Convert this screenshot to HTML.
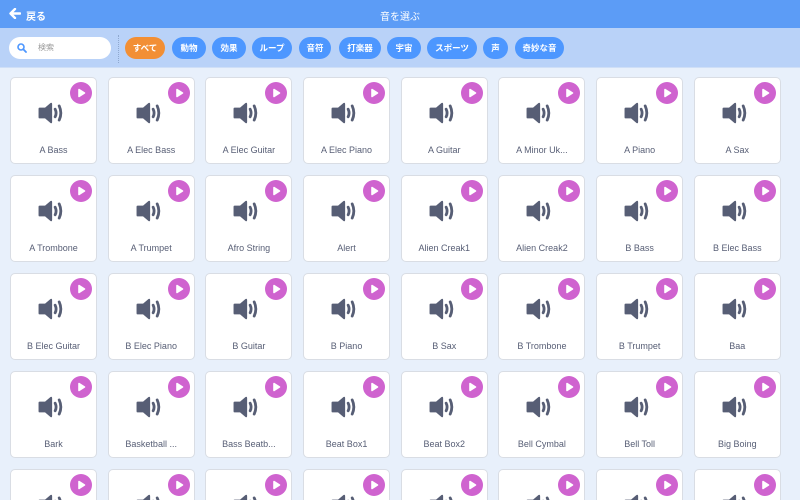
<!DOCTYPE html>
<html><head><meta charset="utf-8">
<style>
*{margin:0;padding:0;box-sizing:border-box}
html,body{width:800px;height:500px;overflow:hidden}
body{background:#e8f0fb;font-family:"Liberation Sans","Noto Sans CJK JP",sans-serif;position:relative}
.hdr{position:absolute;left:0;top:0;width:800px;height:28px;background:#5c9cf6;color:#fff}
.hdr .t{position:absolute;left:0;width:800px;top:8px;text-align:center;font-size:10px}
.hdr .b{position:absolute;left:26px;top:8px;font-size:10px;font-weight:bold}
.bar{position:absolute;left:0;top:28px;width:800px;height:40px;background:#b9d2f8;border-bottom:1px solid #cfdff7}
.search{position:absolute;left:9px;top:9px;width:102px;height:22px;background:#fff;border-radius:11px}
.search span{position:absolute;left:29px;top:5px;font-size:8px;color:#999}
.search svg{position:absolute;left:8px;top:6px}
.sep{position:absolute;left:118px;top:7px;height:28px;border-left:1px dotted #8fa8cf}
.pill{position:absolute;top:9px;height:22px;border-radius:11px;background:#4d97ff;color:#fff;font-size:8.5px;font-weight:bold;line-height:22px;text-align:center}
.wrap{position:absolute;left:0;top:69px;width:800px;height:431px;overflow:hidden}
.grid{position:absolute;left:10px;top:8px;display:grid;grid-template-columns:repeat(8,87px);column-gap:10.7px;row-gap:11px}
.c{width:87px;height:87px;background:#fff;border:1px solid #d9dde4;border-radius:5px;position:relative}
.c .p{position:absolute;left:59px;top:4px}
.c .s{position:absolute;left:27px;top:24px}
.c .l{position:absolute;left:0;width:85px;top:67px;text-align:center;font-size:9px;color:#575e75;white-space:nowrap}
</style></head><body>
<div class="hdr"><svg style="position:absolute;left:9px;top:8px" width="12" height="11" viewBox="0 0 12 11"><path d="M6 1L1.5 5.5L6 10M2 5.5H11" stroke="#fff" stroke-width="2.4" fill="none" stroke-linecap="round" stroke-linejoin="round"/></svg><div class="b">戻る</div><div class="t">音を選ぶ</div></div>
<div class="bar">
<div class="search"><svg width="10" height="10" viewBox="0 0 10 10"><circle cx="4" cy="4" r="3" stroke="#4d97ff" stroke-width="1.6" fill="none"/><path d="M6.3 6.3L9 9" stroke="#4d97ff" stroke-width="1.8" stroke-linecap="round"/></svg><span>検索</span></div>
<div class="sep"></div>
<div class="pill" style="left:125px;width:40px;background:#f28f35">すべて</div>
<div class="pill" style="left:172px;width:34px">動物</div>
<div class="pill" style="left:212px;width:34px">効果</div>
<div class="pill" style="left:252px;width:40px">ループ</div>
<div class="pill" style="left:299px;width:32px">音符</div>
<div class="pill" style="left:339px;width:42px">打楽器</div>
<div class="pill" style="left:387px;width:34px">宇宙</div>
<div class="pill" style="left:427px;width:50px">スポーツ</div>
<div class="pill" style="left:483px;width:25px">声</div>
<div class="pill" style="left:515px;width:49px">奇妙な音</div>
</div>
<svg width="0" height="0" style="position:absolute"><defs>
<g id="pl"><circle cx="11" cy="11" r="11" fill="#cf63cf"/><path d="M9 7.5L14.5 11L9 14.5Z" fill="#fff" stroke="#fff" stroke-width="1.6" stroke-linejoin="round"/></g>
<symbol id="sp" viewBox="0 0 23 20"><path d="M1.5 5H6.5L11.5 0.8Q13 0 13 1.8V18.2Q13 20 11.5 19.2L6.5 15H1.5Q0.5 15 0.5 14V6Q0.5 5 1.5 5Z" fill="#575e75"/><path d="M15.8 6.5Q17.5 10 15.8 13.5" stroke="#575e75" stroke-width="2.6" fill="none" stroke-linecap="round"/><path d="M19.5 3.5Q22.5 10 19.5 16.5" stroke="#575e75" stroke-width="2.6" fill="none" stroke-linecap="round"/></symbol>
</defs></svg>
<div class="wrap"><div class="grid">
<div class="c"><svg class="p" width="22" height="22"><use href="#pl"/></svg><svg class="s" width="25" height="22"><use href="#sp"/></svg><div class="l">A Bass</div></div>
<div class="c"><svg class="p" width="22" height="22"><use href="#pl"/></svg><svg class="s" width="25" height="22"><use href="#sp"/></svg><div class="l">A Elec Bass</div></div>
<div class="c"><svg class="p" width="22" height="22"><use href="#pl"/></svg><svg class="s" width="25" height="22"><use href="#sp"/></svg><div class="l">A Elec Guitar</div></div>
<div class="c"><svg class="p" width="22" height="22"><use href="#pl"/></svg><svg class="s" width="25" height="22"><use href="#sp"/></svg><div class="l">A Elec Piano</div></div>
<div class="c"><svg class="p" width="22" height="22"><use href="#pl"/></svg><svg class="s" width="25" height="22"><use href="#sp"/></svg><div class="l">A Guitar</div></div>
<div class="c"><svg class="p" width="22" height="22"><use href="#pl"/></svg><svg class="s" width="25" height="22"><use href="#sp"/></svg><div class="l">A Minor Uk...</div></div>
<div class="c"><svg class="p" width="22" height="22"><use href="#pl"/></svg><svg class="s" width="25" height="22"><use href="#sp"/></svg><div class="l">A Piano</div></div>
<div class="c"><svg class="p" width="22" height="22"><use href="#pl"/></svg><svg class="s" width="25" height="22"><use href="#sp"/></svg><div class="l">A Sax</div></div>
<div class="c"><svg class="p" width="22" height="22"><use href="#pl"/></svg><svg class="s" width="25" height="22"><use href="#sp"/></svg><div class="l">A Trombone</div></div>
<div class="c"><svg class="p" width="22" height="22"><use href="#pl"/></svg><svg class="s" width="25" height="22"><use href="#sp"/></svg><div class="l">A Trumpet</div></div>
<div class="c"><svg class="p" width="22" height="22"><use href="#pl"/></svg><svg class="s" width="25" height="22"><use href="#sp"/></svg><div class="l">Afro String</div></div>
<div class="c"><svg class="p" width="22" height="22"><use href="#pl"/></svg><svg class="s" width="25" height="22"><use href="#sp"/></svg><div class="l">Alert</div></div>
<div class="c"><svg class="p" width="22" height="22"><use href="#pl"/></svg><svg class="s" width="25" height="22"><use href="#sp"/></svg><div class="l">Alien Creak1</div></div>
<div class="c"><svg class="p" width="22" height="22"><use href="#pl"/></svg><svg class="s" width="25" height="22"><use href="#sp"/></svg><div class="l">Alien Creak2</div></div>
<div class="c"><svg class="p" width="22" height="22"><use href="#pl"/></svg><svg class="s" width="25" height="22"><use href="#sp"/></svg><div class="l">B Bass</div></div>
<div class="c"><svg class="p" width="22" height="22"><use href="#pl"/></svg><svg class="s" width="25" height="22"><use href="#sp"/></svg><div class="l">B Elec Bass</div></div>
<div class="c"><svg class="p" width="22" height="22"><use href="#pl"/></svg><svg class="s" width="25" height="22"><use href="#sp"/></svg><div class="l">B Elec Guitar</div></div>
<div class="c"><svg class="p" width="22" height="22"><use href="#pl"/></svg><svg class="s" width="25" height="22"><use href="#sp"/></svg><div class="l">B Elec Piano</div></div>
<div class="c"><svg class="p" width="22" height="22"><use href="#pl"/></svg><svg class="s" width="25" height="22"><use href="#sp"/></svg><div class="l">B Guitar</div></div>
<div class="c"><svg class="p" width="22" height="22"><use href="#pl"/></svg><svg class="s" width="25" height="22"><use href="#sp"/></svg><div class="l">B Piano</div></div>
<div class="c"><svg class="p" width="22" height="22"><use href="#pl"/></svg><svg class="s" width="25" height="22"><use href="#sp"/></svg><div class="l">B Sax</div></div>
<div class="c"><svg class="p" width="22" height="22"><use href="#pl"/></svg><svg class="s" width="25" height="22"><use href="#sp"/></svg><div class="l">B Trombone</div></div>
<div class="c"><svg class="p" width="22" height="22"><use href="#pl"/></svg><svg class="s" width="25" height="22"><use href="#sp"/></svg><div class="l">B Trumpet</div></div>
<div class="c"><svg class="p" width="22" height="22"><use href="#pl"/></svg><svg class="s" width="25" height="22"><use href="#sp"/></svg><div class="l">Baa</div></div>
<div class="c"><svg class="p" width="22" height="22"><use href="#pl"/></svg><svg class="s" width="25" height="22"><use href="#sp"/></svg><div class="l">Bark</div></div>
<div class="c"><svg class="p" width="22" height="22"><use href="#pl"/></svg><svg class="s" width="25" height="22"><use href="#sp"/></svg><div class="l">Basketball ...</div></div>
<div class="c"><svg class="p" width="22" height="22"><use href="#pl"/></svg><svg class="s" width="25" height="22"><use href="#sp"/></svg><div class="l">Bass Beatb...</div></div>
<div class="c"><svg class="p" width="22" height="22"><use href="#pl"/></svg><svg class="s" width="25" height="22"><use href="#sp"/></svg><div class="l">Beat Box1</div></div>
<div class="c"><svg class="p" width="22" height="22"><use href="#pl"/></svg><svg class="s" width="25" height="22"><use href="#sp"/></svg><div class="l">Beat Box2</div></div>
<div class="c"><svg class="p" width="22" height="22"><use href="#pl"/></svg><svg class="s" width="25" height="22"><use href="#sp"/></svg><div class="l">Bell Cymbal</div></div>
<div class="c"><svg class="p" width="22" height="22"><use href="#pl"/></svg><svg class="s" width="25" height="22"><use href="#sp"/></svg><div class="l">Bell Toll</div></div>
<div class="c"><svg class="p" width="22" height="22"><use href="#pl"/></svg><svg class="s" width="25" height="22"><use href="#sp"/></svg><div class="l">Big Boing</div></div>
<div class="c"><svg class="p" width="22" height="22"><use href="#pl"/></svg><svg class="s" width="25" height="22"><use href="#sp"/></svg></div>
<div class="c"><svg class="p" width="22" height="22"><use href="#pl"/></svg><svg class="s" width="25" height="22"><use href="#sp"/></svg></div>
<div class="c"><svg class="p" width="22" height="22"><use href="#pl"/></svg><svg class="s" width="25" height="22"><use href="#sp"/></svg></div>
<div class="c"><svg class="p" width="22" height="22"><use href="#pl"/></svg><svg class="s" width="25" height="22"><use href="#sp"/></svg></div>
<div class="c"><svg class="p" width="22" height="22"><use href="#pl"/></svg><svg class="s" width="25" height="22"><use href="#sp"/></svg></div>
<div class="c"><svg class="p" width="22" height="22"><use href="#pl"/></svg><svg class="s" width="25" height="22"><use href="#sp"/></svg></div>
<div class="c"><svg class="p" width="22" height="22"><use href="#pl"/></svg><svg class="s" width="25" height="22"><use href="#sp"/></svg></div>
<div class="c"><svg class="p" width="22" height="22"><use href="#pl"/></svg><svg class="s" width="25" height="22"><use href="#sp"/></svg></div>
</div></div>
</body></html>
